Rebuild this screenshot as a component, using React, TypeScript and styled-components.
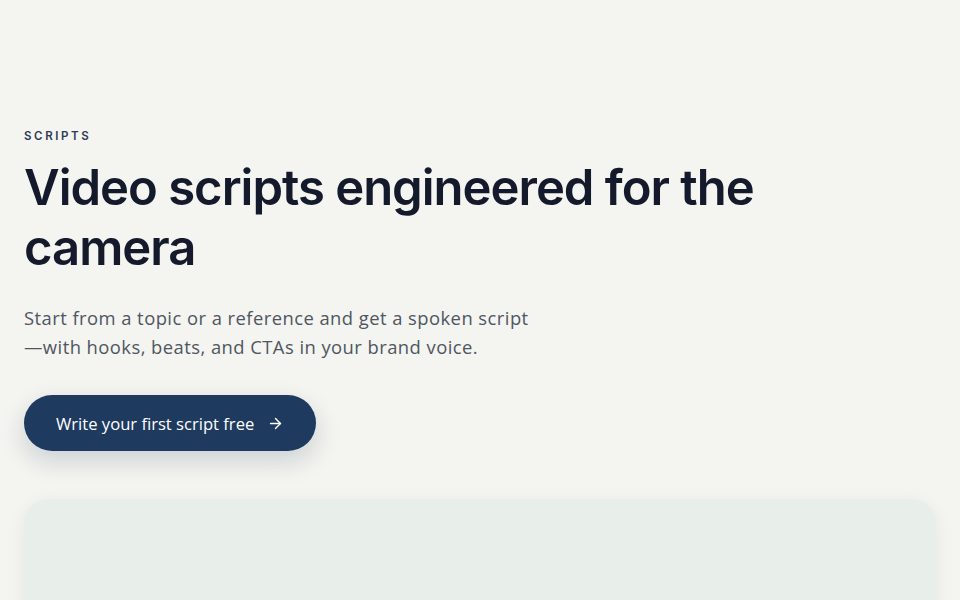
import styled, { createGlobalStyle } from "styled-components";
import { ArrowRight } from "lucide-react";

const GlobalStyle = createGlobalStyle`
  html, body {
    margin: 0;
    padding: 0;
    background: #f4f4f0;
  }
  * {
    box-sizing: border-box;
  }
`;

const Page = styled.main`
  height: 600px;
  padding: 128px 24px 0;
  overflow: hidden;
`;

const Hero = styled.section`
  display: flex;
  flex-direction: column;
  align-items: flex-start;
`;

const Eyebrow = styled.p`
  margin: 0;
  font-family: "Inter", "Liberation Sans", sans-serif;
  font-size: 11.5px;
  font-weight: 600;
  letter-spacing: 2.6px;
  color: #2a3a58;
  line-height: 16px;
`;

const Title = styled.h1`
  margin: 14px 0 0;
  max-width: 770px;
  font-family: "Inter", "Liberation Sans", sans-serif;
  font-size: 49px;
  font-weight: 560;
  letter-spacing: -1px;
  line-height: 60px;
  color: #141a2b;
`;

const Lead = styled.p`
  margin: 25px 0 0;
  max-width: 560px;
  font-family: "Open Sans", "Liberation Sans", sans-serif;
  font-size: 18.4px;
  letter-spacing: 0.45px;
  line-height: 29px;
  color: #4f5661;
`;

const CtaButton = styled.button`
  margin-top: 34px;
  display: inline-flex;
  align-items: center;
  gap: 13px;
  height: 56px;
  padding: 0 32px;
  border: none;
  border-radius: 28px;
  background: #1e3a5f;
  color: #ffffff;
  font-family: "Open Sans", "Liberation Sans", sans-serif;
  font-size: 16.6px;
  cursor: pointer;
  box-shadow: 0 10px 24px rgba(30, 58, 95, 0.18);
`;

const Preview = styled.div`
  margin-top: 48px;
  height: 200px;
  border-radius: 24px;
  background: #e8efea;
  box-shadow: 0 4px 20px rgba(40, 70, 60, 0.06);
`;

export default function App() {
  return (
    <>
      <GlobalStyle />
      <Page>
        <Hero>
          <Eyebrow>SCRIPTS</Eyebrow>
          <Title>Video scripts engineered for the camera</Title>
          <Lead>
            Start from a topic or a reference and get a spoken script
            <br />—with hooks, beats, and CTAs in your brand voice.
          </Lead>
          <CtaButton>
            Write your first script free
            <ArrowRight size={17} strokeWidth={2} />
          </CtaButton>
        </Hero>
        <Preview />
      </Page>
    </>
  );
}
